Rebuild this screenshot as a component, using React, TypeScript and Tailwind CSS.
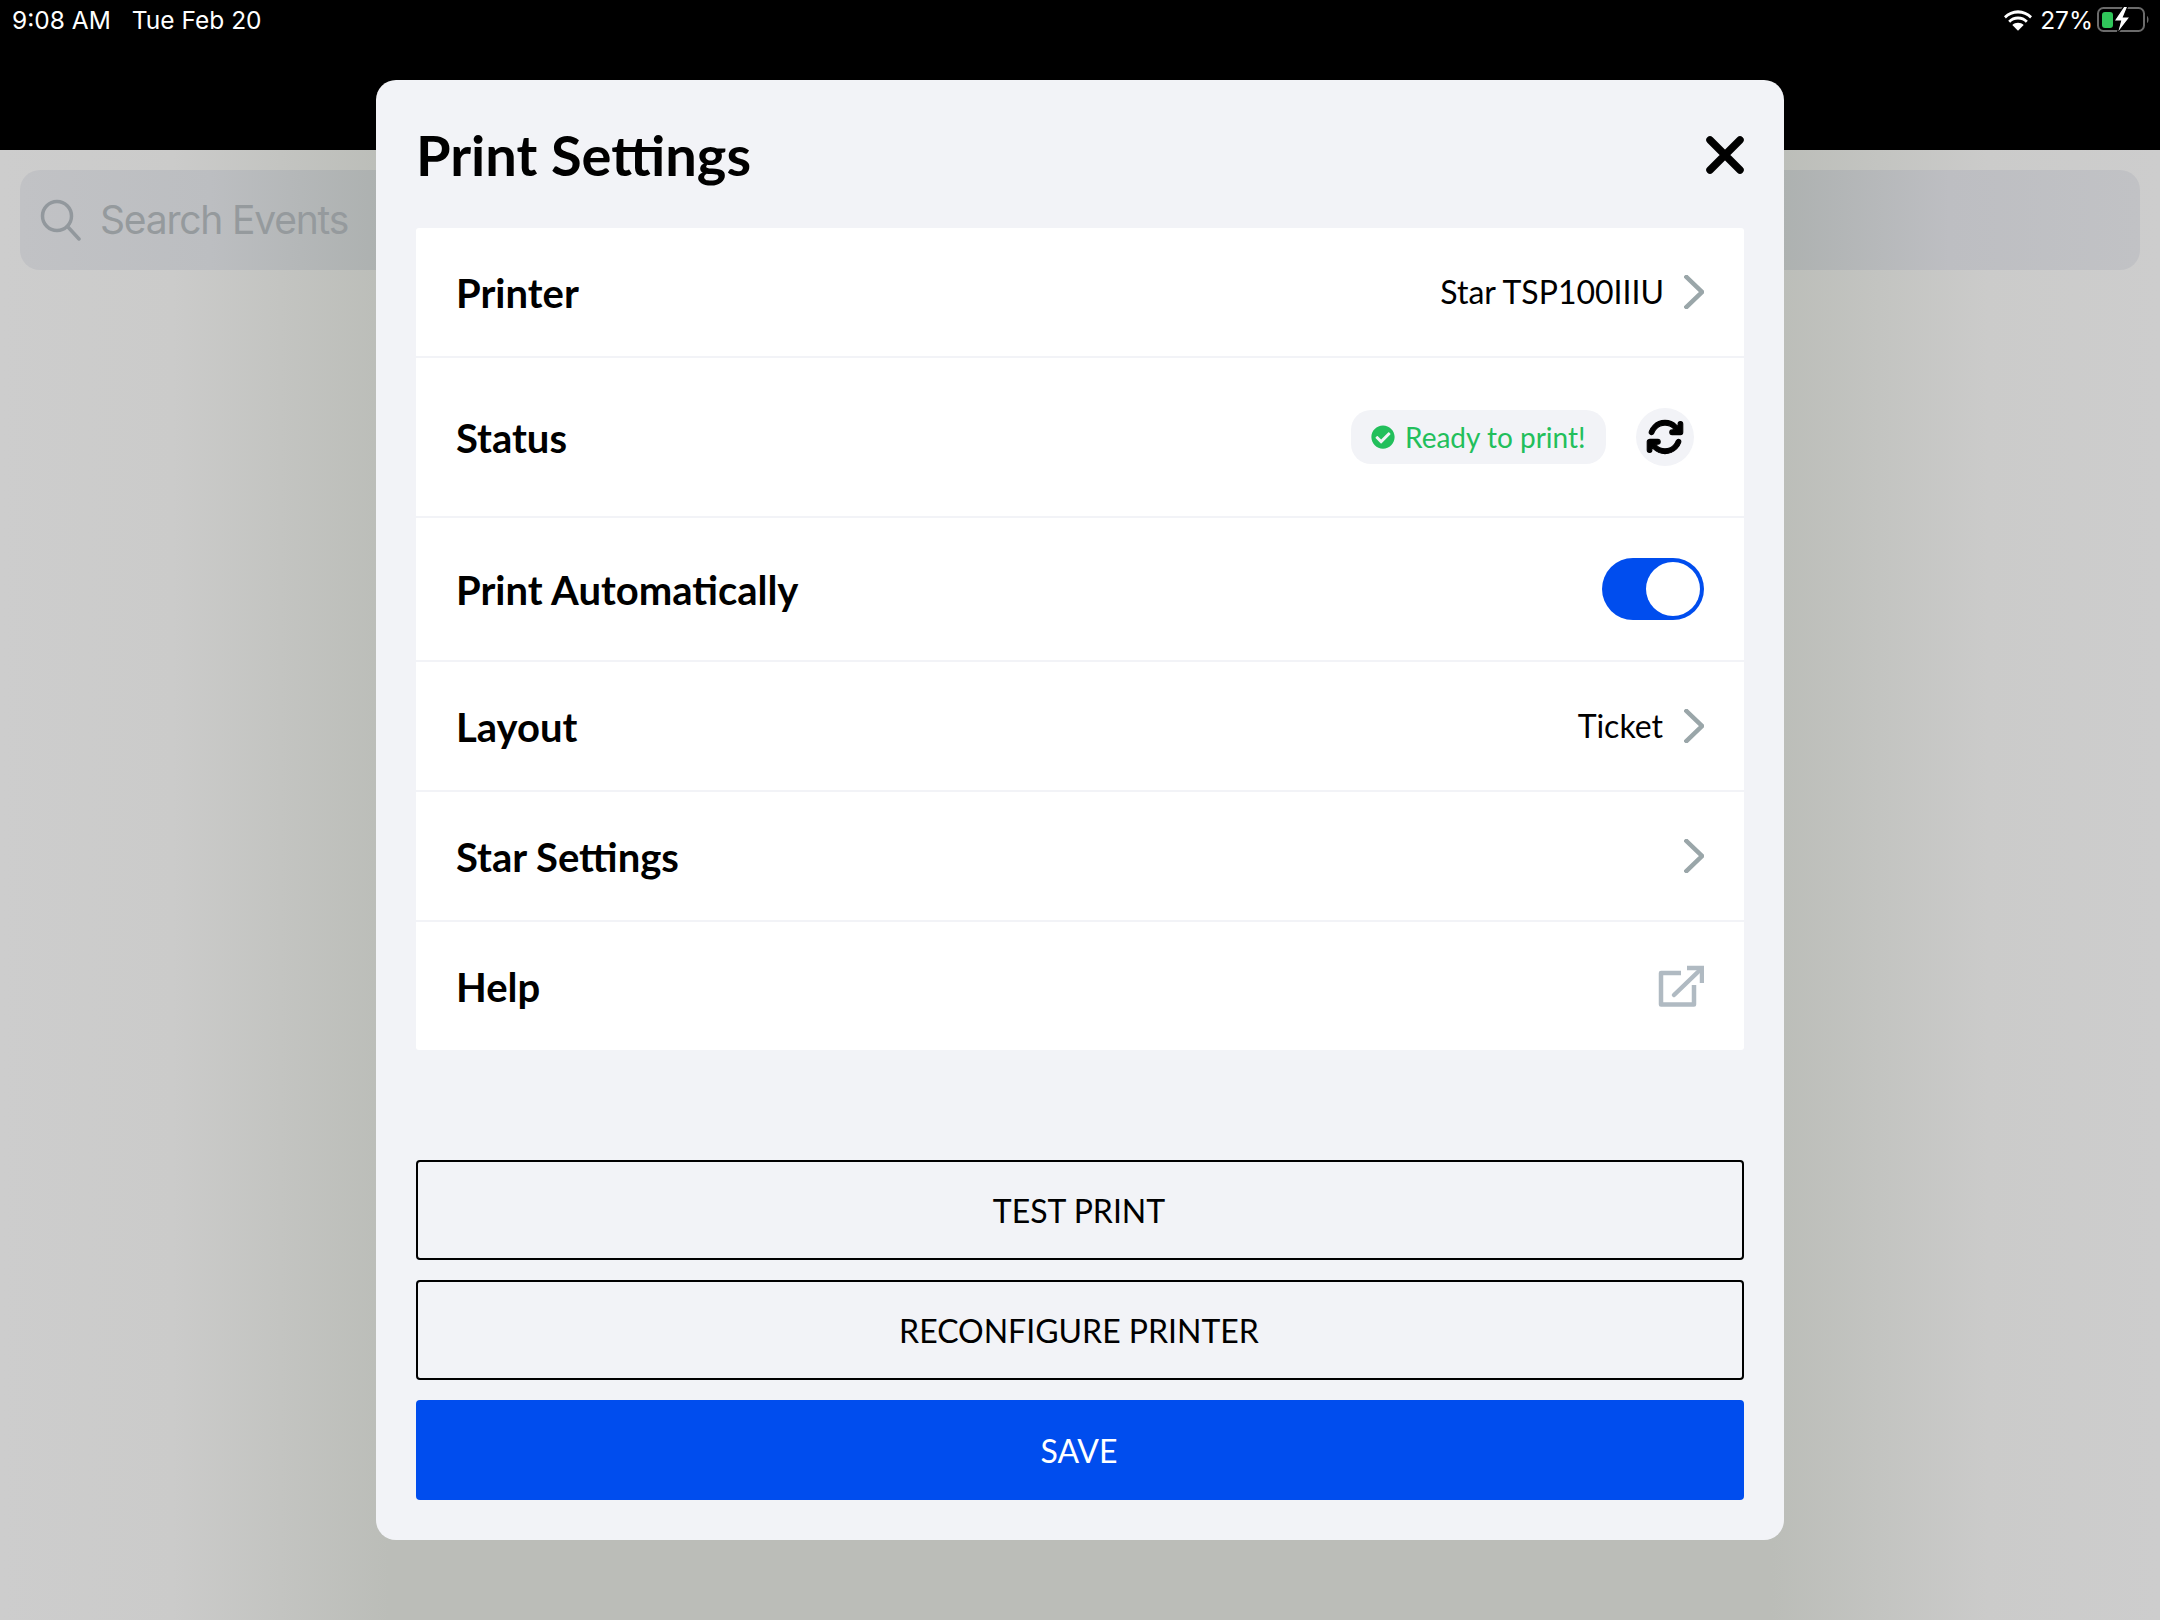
import { FaCheckCircle } from "react-icons/fa";
import { FaArrowsRotate } from "react-icons/fa6";

const Chevron = () => (
  <svg width="20" height="34" viewBox="0 0 20 34" fill="none" className="shrink-0">
    <path d="M2.500 2 L18 17 L2.500 32" stroke="#9aa6a9" strokeWidth="4.500" strokeLinecap="square" />
  </svg>
);

const Row = ({ label, h, border = true, children }: { label: string; h: string; border?: boolean; children?: React.ReactNode }) => (
  <div className={`flex items-center justify-between pl-10 pr-10 ${h} ${border ? "border-b-2 border-[#f2f3f7]" : ""}`}>
    <span className="pt-[2px] text-[40px] font-bold text-black">{label}</span>
    {children}
  </div>
);

export default function App() {
  return (
    <div className="relative w-[2160px] h-[1620px] overflow-hidden bg-[linear-gradient(90deg,#cdcdcd_0%,#cbcbca_8%,#bbbdb8_18%,#bbbdb8_82%,#cbcbca_92%,#cdcdcd_100%)] font-['Lato',sans-serif]">
      <div className="h-[150px] bg-black text-white font-['Inter',sans-serif] text-[24.5px] leading-[40px] flex items-start justify-between pl-3 pr-[10px]">
        <div className="flex gap-[21px]">
          <span>9:08 AM</span>
          <span>Tue Feb 20</span>
        </div>
        <div className="flex items-center h-[40px]">
          <svg width="28" height="21" viewBox="0 0 30 22" fill="white" className="mr-[8px]">
            <path d="M15 3.500C20 3.500 24.700 5.500 28 8.800L30 6.500C26 2.500 20.800 0 15 0S4 2.500 0 6.500L2 8.800C5.300 5.500 10 3.500 15 3.500Z" />
            <path d="M15 10C18.300 10 21.200 11.200 23.400 13.400L25.500 11.200C22.700 8.400 19 6.700 15 6.700S7.300 8.400 4.500 11.200L6.600 13.400C8.800 11.200 11.700 10 15 10Z" />
            <path d="M15 13.300C17.300 13.300 19.500 14.200 21.100 15.800L15 22L8.900 15.800C10.500 14.200 12.700 13.300 15 13.300Z" />
          </svg>
          <span className="mr-[4px]">27%</span>
          <svg width="53" height="26" viewBox="0 0 53 26" fill="none">
            <rect x="1" y="1" width="46" height="23" rx="5.500" stroke="#6b6b6b" strokeWidth="2" />
            <rect x="5" y="5" width="11" height="16" rx="3" fill="#30c65a" />
            <path d="M50 9 C52 10 52 15 50 16 Z" fill="#6b6b6b" />
            <path d="M27 -1 L17 14 H23.500 L20 27 L33 10 H26.500 L31 -1 Z" fill="white" stroke="black" strokeWidth="1.200" />
          </svg>
        </div>
      </div>

      <div className="mx-5 mt-5 h-[100px] rounded-[20px] bg-[linear-gradient(90deg,#c1c2c5_0%,#bcbec1_9%,#adb1b0_17%,#adb1b0_83%,#bdbec2_91%,#c1c2c5_100%)] flex items-center pl-5 gap-[18px]">
        <svg width="42" height="42" viewBox="0 0 42 42" fill="none" stroke="#92989d" strokeWidth="3.500" strokeLinecap="round">
          <circle cx="17" cy="17" r="14.500" />
          <path d="M27.500 27.500 L39 40" />
        </svg>
        <span className="pt-[1px] font-['Inter',sans-serif] text-[39px] text-[#959a9d] tracking-[-1.200px]">Search Events</span>
      </div>

      <div className="absolute left-[376px] top-[80px] w-[1408px] h-[1460px] rounded-[20px] bg-[#f2f3f7] px-10 flex flex-col">
        <div className="h-[148px] flex items-center justify-between">
          <h1 className="text-[56px] font-bold text-black mt-[2px]">Print Settings</h1>
          <svg width="38" height="38" viewBox="0 0 38 38" fill="none" stroke="black" strokeWidth="7.500" strokeLinecap="round" className="mt-[1px]">
            <path d="M4 4 L34 34 M34 4 L4 34" />
          </svg>
        </div>

        <div className="bg-white rounded-[3px] flex flex-col">
          <Row label="Printer" h="h-[130px]">
            <div className="flex items-center gap-[20px]">
              <span className="text-[32px] text-black">Star TSP100IIIU</span>
              <Chevron />
            </div>
          </Row>
          <Row label="Status" h="h-[160px]">
            <div className="flex items-center gap-[30px] mr-[10px]">
              <div className="h-[54px] w-[255px] rounded-[20px] bg-[#f2f3f7] flex items-center pl-5 gap-[10px]">
                <FaCheckCircle className="text-[#22bf5b] text-[24px]" />
                <span className="text-[28px] text-[#22bf5b]">Ready to print!</span>
              </div>
              <div className="w-[58px] h-[58px] rounded-full bg-[#f2f3f7] flex items-center justify-center">
                <FaArrowsRotate className="text-black text-[38px]" stroke="currentColor" strokeWidth={14} />
              </div>
            </div>
          </Row>
          <Row label="Print Automatically" h="h-[144px]">
            <div className="w-[102px] h-[62px] rounded-full bg-[#004dee] flex items-center justify-end pr-1">
              <div className="w-[54px] h-[54px] rounded-full bg-white" />
            </div>
          </Row>
          <Row label="Layout" h="h-[130px]">
            <div className="flex items-center gap-[21px]">
              <span className="text-[32px] text-black">Ticket</span>
              <Chevron />
            </div>
          </Row>
          <Row label="Star Settings" h="h-[130px]">
            <Chevron />
          </Row>
          <Row label="Help" h="h-[128px]" border={false}>
            <svg width="46" height="42" viewBox="0 0 46 42" fill="none" stroke="#b0bac2" strokeWidth="4.500">
              <path d="M23 8 H3 V39.500 H36 V20" strokeLinejoin="round" />
              <path d="M16 30 L42 5" strokeLinecap="round" />
              <path d="M29 3 H44 V18" />
            </svg>
          </Row>
        </div>

        <div className="mt-[110px] flex flex-col gap-5">
          <button className="h-[100px] pt-[1px] pr-[2px] rounded-[4px] border-2 border-black text-[32px] text-black">TEST PRINT</button>
          <button className="h-[100px] pt-[1px] pr-[2px] rounded-[4px] border-2 border-black text-[32px] text-black">RECONFIGURE PRINTER</button>
          <button className="h-[100px] pt-[1px] pr-[2px] rounded-[4px] bg-[#004dee] text-[32px] text-white">SAVE</button>
        </div>
      </div>
    </div>
  );
}
